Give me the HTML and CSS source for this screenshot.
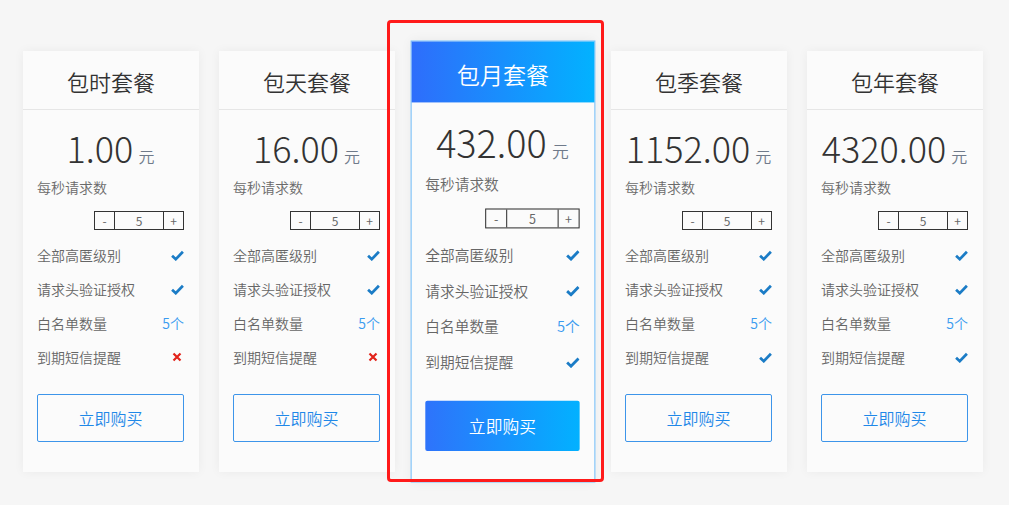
FILE: index.html
```html
<!DOCTYPE html>
<html lang="zh-CN">
<head>
<meta charset="utf-8">
<title>套餐</title>
<link rel="stylesheet" href="styles.css">
</head>
<body>
<div class="plans">
  <div class="card">
    <div class="card-head">包时套餐</div>
    <div class="card-body">
      <div class="price"><span class="num">1.00</span><span class="unit">元</span></div>
      <div class="label">每秒请求数</div>
      <div class="stepper"><span class="st-btn">-</span><span class="st-val">5</span><span class="st-btn">+</span></div>
      <ul class="features">
        <li><span>全部高匿级别</span><svg class="ic-check" viewBox="0 0 12 10"><path d="M1 5.2 L4.4 8.4 L11 1.6"/></svg></li>
        <li><span>请求头验证授权</span><svg class="ic-check" viewBox="0 0 12 10"><path d="M1 5.2 L4.4 8.4 L11 1.6"/></svg></li>
        <li><span>白名单数量</span><span class="count">5个</span></li>
        <li><span>到期短信提醒</span><svg class="ic-x" viewBox="0 0 10 10"><path d="M1.5 1.5 L8.5 8.5 M8.5 1.5 L1.5 8.5"/></svg></li>
      </ul>
      <a class="buy">立即购买</a>
    </div>
  </div>
  <div class="card">
    <div class="card-head">包天套餐</div>
    <div class="card-body">
      <div class="price"><span class="num">16.00</span><span class="unit">元</span></div>
      <div class="label">每秒请求数</div>
      <div class="stepper"><span class="st-btn">-</span><span class="st-val">5</span><span class="st-btn">+</span></div>
      <ul class="features">
        <li><span>全部高匿级别</span><svg class="ic-check" viewBox="0 0 12 10"><path d="M1 5.2 L4.4 8.4 L11 1.6"/></svg></li>
        <li><span>请求头验证授权</span><svg class="ic-check" viewBox="0 0 12 10"><path d="M1 5.2 L4.4 8.4 L11 1.6"/></svg></li>
        <li><span>白名单数量</span><span class="count">5个</span></li>
        <li><span>到期短信提醒</span><svg class="ic-x" viewBox="0 0 10 10"><path d="M1.5 1.5 L8.5 8.5 M8.5 1.5 L1.5 8.5"/></svg></li>
      </ul>
      <a class="buy">立即购买</a>
    </div>
  </div>
  <div class="card card-active">
    <div class="card-head">包月套餐</div>
    <div class="card-body">
      <div class="price"><span class="num">432.00</span><span class="unit">元</span></div>
      <div class="label">每秒请求数</div>
      <div class="stepper"><span class="st-btn">-</span><span class="st-val">5</span><span class="st-btn">+</span></div>
      <ul class="features">
        <li><span>全部高匿级别</span><svg class="ic-check" viewBox="0 0 12 10"><path d="M1 5.2 L4.4 8.4 L11 1.6"/></svg></li>
        <li><span>请求头验证授权</span><svg class="ic-check" viewBox="0 0 12 10"><path d="M1 5.2 L4.4 8.4 L11 1.6"/></svg></li>
        <li><span>白名单数量</span><span class="count">5个</span></li>
        <li><span>到期短信提醒</span><svg class="ic-check" viewBox="0 0 12 10"><path d="M1 5.2 L4.4 8.4 L11 1.6"/></svg></li>
      </ul>
      <a class="buy">立即购买</a>
    </div>
  </div>
  <div class="card">
    <div class="card-head">包季套餐</div>
    <div class="card-body">
      <div class="price"><span class="num">1152.00</span><span class="unit">元</span></div>
      <div class="label">每秒请求数</div>
      <div class="stepper"><span class="st-btn">-</span><span class="st-val">5</span><span class="st-btn">+</span></div>
      <ul class="features">
        <li><span>全部高匿级别</span><svg class="ic-check" viewBox="0 0 12 10"><path d="M1 5.2 L4.4 8.4 L11 1.6"/></svg></li>
        <li><span>请求头验证授权</span><svg class="ic-check" viewBox="0 0 12 10"><path d="M1 5.2 L4.4 8.4 L11 1.6"/></svg></li>
        <li><span>白名单数量</span><span class="count">5个</span></li>
        <li><span>到期短信提醒</span><svg class="ic-check" viewBox="0 0 12 10"><path d="M1 5.2 L4.4 8.4 L11 1.6"/></svg></li>
      </ul>
      <a class="buy">立即购买</a>
    </div>
  </div>
  <div class="card">
    <div class="card-head">包年套餐</div>
    <div class="card-body">
      <div class="price"><span class="num">4320.00</span><span class="unit">元</span></div>
      <div class="label">每秒请求数</div>
      <div class="stepper"><span class="st-btn">-</span><span class="st-val">5</span><span class="st-btn">+</span></div>
      <ul class="features">
        <li><span>全部高匿级别</span><svg class="ic-check" viewBox="0 0 12 10"><path d="M1 5.2 L4.4 8.4 L11 1.6"/></svg></li>
        <li><span>请求头验证授权</span><svg class="ic-check" viewBox="0 0 12 10"><path d="M1 5.2 L4.4 8.4 L11 1.6"/></svg></li>
        <li><span>白名单数量</span><span class="count">5个</span></li>
        <li><span>到期短信提醒</span><svg class="ic-check" viewBox="0 0 12 10"><path d="M1 5.2 L4.4 8.4 L11 1.6"/></svg></li>
      </ul>
      <a class="buy">立即购买</a>
    </div>
  </div>
</div>
<div class="highlight-frame"></div>
</body>
</html>
```

FILE: styles.css
```css
* { box-sizing: border-box; }
html, body { margin: 0; padding: 0; }
body {
  background: #f6f6f6;
  font-family: "Noto Sans CJK SC", "Noto Sans", sans-serif;
  width: 1009px;
  height: 505px;
  overflow: hidden;
  position: relative;
}
.plans {
  display: flex;
  gap: 20px;
  padding: 51px 0 0 23px;
  align-items: flex-start;
}
.card {
  width: 176px;
  background: #fbfbfb;
  box-shadow: 0 0 10px rgba(0, 0, 0, 0.05);
}
.card-head {
  height: 59px;
  border-bottom: 1px solid #e6e6e6;
  display: flex;
  align-items: center;
  justify-content: center;
  font-size: 22px;
  font-weight: 350;
  color: #333;
  padding-top: 2px;
}
.card-body {
  padding: 13px 15px 30px 14px;
}
.price {
  height: 48px;
  line-height: 48px;
  text-align: center;
  color: #333;
  white-space: nowrap;
}
.num { font-size: 36px; font-weight: 300; }
.unit { font-size: 16px; color: #6f7a8a; margin-left: 5px; font-weight: 350; }
.label {
  margin-top: 6px;
  height: 20px;
  line-height: 20px;
  font-size: 14px;
  font-weight: 350;
  color: #6a6a6a;
}
.stepper {
  margin: 14px 0 0 auto;
  width: 90px;
  height: 19px;
  border: 1px solid #333;
  display: flex;
  font-size: 12px;
  color: #666;
  line-height: 17px;
}
.st-btn { width: 19px; text-align: center; }
.st-val {
  flex: 1;
  text-align: center;
  border-left: 1px solid #333;
  border-right: 1px solid #333;
}
.features {
  list-style: none;
  margin: 8px 0 0;
  padding: 0;
}
.features li {
  height: 34px;
  display: flex;
  align-items: center;
  justify-content: space-between;
  font-size: 14px;
  font-weight: 350;
  color: #666;
}
.count { color: #3a9bf0; }
.ic-check {
  width: 13px;
  height: 11px;
  margin-right: 0;
  fill: none;
  stroke: #1b7cc6;
  stroke-width: 2.5;
}
.ic-x {
  width: 10px;
  height: 10px;
  margin-right: 2px;
  fill: none;
  stroke: #e2231a;
  stroke-width: 2.2;
}
.buy {
  display: flex;
  align-items: center;
  justify-content: center;
  margin-top: 20px;
  height: 48px;
  border: 1px solid #3d95ea;
  border-radius: 2px;
  color: #1f88e8;
  font-size: 16px;
  font-weight: 350;
}
.card-active {
  border: 1px solid #74bdf7;
  transform: scale(1.05);
}
.card-active .card-head {
  height: 58px;
  background: linear-gradient(90deg, #2e6dfb, #02b2ff);
  color: #fff;
  border-bottom: none;
}
.card-active .card-body { padding-left: 13px; padding-right: 14px; padding-bottom: 29px; }
.card-active .buy {
  border: none;
  background: linear-gradient(90deg, #2e73fb, #02b1ff);
  color: #fff;
}
.highlight-frame {
  position: absolute;
  left: 387px;
  top: 20px;
  width: 217px;
  height: 462px;
  border: 3px solid #ff1a1a;
  border-radius: 4px;
  pointer-events: none;
}
```
